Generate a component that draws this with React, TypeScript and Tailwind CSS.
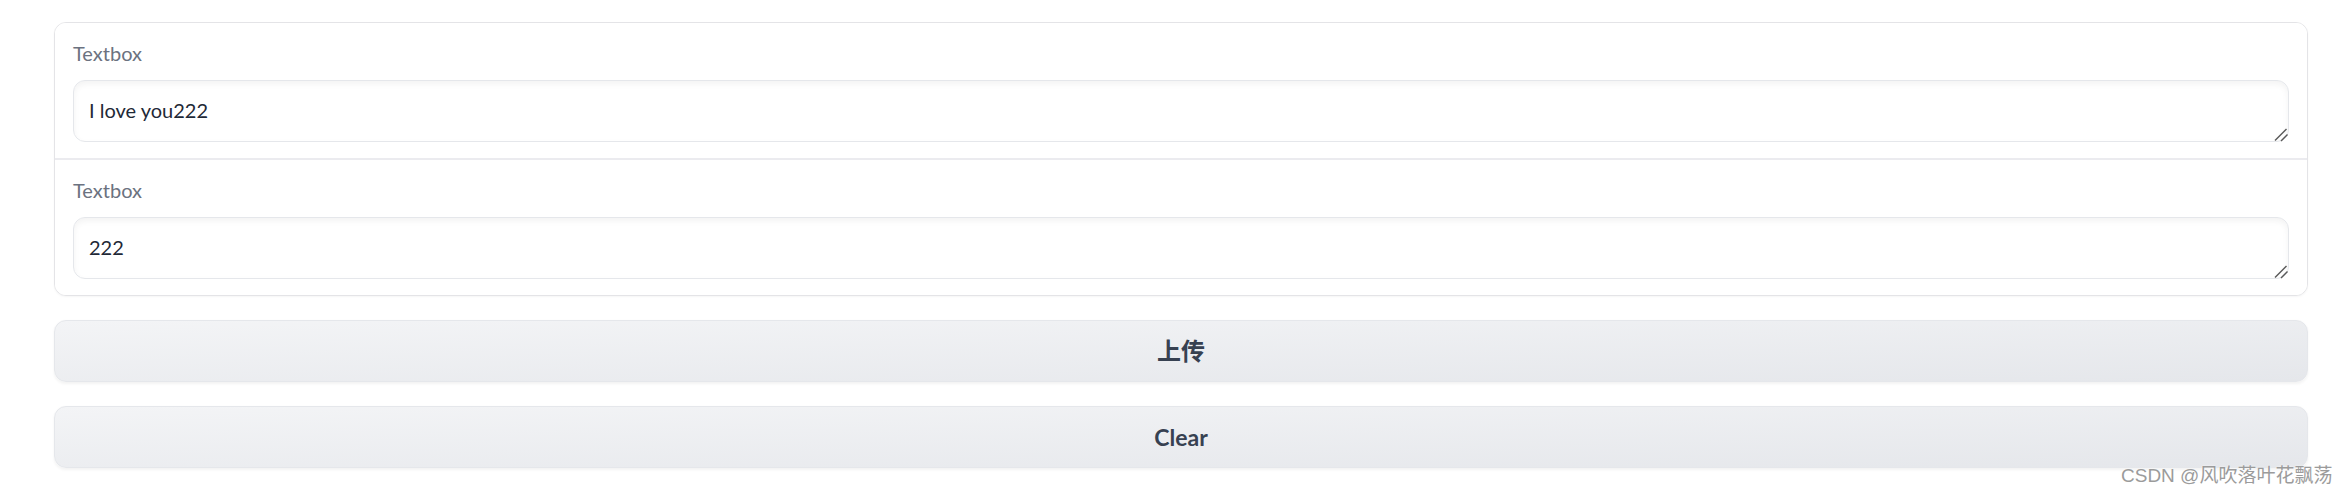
import React from "react";

const latin = "font-['Lato','Noto_Sans_CJK_SC',sans-serif]";

const Grip = () => (
    <svg
        className="pointer-events-none absolute right-0 bottom-0 h-[16px] w-[16px]"
        viewBox="0 0 16 16"
        fill="none"
        stroke="#595959"
        strokeWidth="1.5"
    >
        <path d="M2 14.5 L13.5 3" />
        <path d="M8 15 L14.5 8.5" />
    </svg>
);

const TextBlock = ({ value }: { value: string }) => (
    <div className="px-[18px] pt-[15px] pb-[16px] bg-white">
        <label className="block text-[20px] leading-[31px] text-[#6b7280] mb-[11px]">
            Textbox
        </label>
        <div className="relative">
            <textarea
                defaultValue={value}
                className={`block w-full h-[62px] resize-none rounded-[12px] border border-[#e5e7eb] bg-white px-[15px] pt-[14px] pb-[10px] text-[20px] leading-[31px] text-[#1f2937] shadow-[inset_0_3px_6px_rgba(0,0,0,0.05)] outline-none ${latin}`}
            />
            <Grip />
        </div>
    </div>
);

const App = () => {
    return (
        <div className={`relative min-h-[492px] bg-white pl-[54px] pr-[39px] pt-[22px] ${latin}`}>
            <div className="flex flex-col gap-[24px]">
                <div className="rounded-[12px] border border-[#e4e4e7] bg-white overflow-hidden shadow-[0_1px_2px_rgba(0,0,0,0.04)]">
                    <TextBlock value="I love you222" />
                    <div className="h-[2px] bg-[#ebebef]" />
                    <TextBlock value="222" />
                </div>
                <button className="h-[62px] w-full rounded-[12px] border border-[#e5e7eb] bg-gradient-to-br from-[#f3f4f6] to-[#e5e7eb] text-[24px] font-bold text-[#374151] shadow-[0_1.5px_3px_rgba(0,0,0,0.05)]">
                    上传
                </button>
                <button className="h-[62px] w-full rounded-[12px] border border-[#e5e7eb] bg-gradient-to-br from-[#f3f4f6] to-[#e5e7eb] text-[23px] font-bold text-[#374151] shadow-[0_1.5px_3px_rgba(0,0,0,0.05)]">
                    Clear
                </button>
            </div>
            <div className="absolute left-[2121px] top-[464px] text-[19px] leading-[24px] text-[#9b9b9b] font-['Liberation_Sans','Noto_Sans_CJK_SC',sans-serif] [text-shadow:0_0_2px_#fff]">
                CSDN @风吹落叶花飘荡
            </div>
        </div>
    );
};

export default App;
